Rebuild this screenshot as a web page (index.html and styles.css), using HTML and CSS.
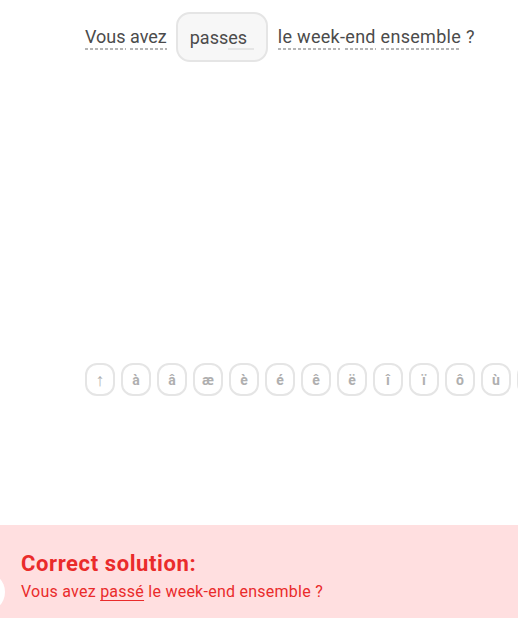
FILE: index.html
```html
<!DOCTYPE html>
<html lang="fr">
<head>
<meta charset="utf-8">
<link rel="stylesheet" href="styles.css">
</head>
<body>
<div class="page">
  <main class="challenge">
    <div class="sentence">
      <span class="tok">Vous</span><span class="sp"> </span><span class="tok">avez</span>
      <div class="answer"><span class="typed">passes<span class="blank"></span></span></div>
      <span class="rest"><span class="tok">le week</span><span class="sp">-</span><span class="tok">end</span><span class="sp"> </span><span class="tok">ensemble</span><span class="sp"> ?</span></span>
    </div>
    <div class="keys">
      <button class="key shift">↑</button>
      <button class="key">à</button>
      <button class="key">â</button>
      <button class="key">æ</button>
      <button class="key">è</button>
      <button class="key">é</button>
      <button class="key">ê</button>
      <button class="key">ë</button>
      <button class="key">î</button>
      <button class="key">ï</button>
      <button class="key">ô</button>
      <button class="key">ù</button>
      <button class="key">û</button>
    </div>
  </main>
  <footer class="feedback">
    <span class="bubble"></span>
    <h2 class="fb-title">Correct solution:</h2>
    <p class="fb-text">Vous avez <u>passé</u> le week-end ensemble ?</p>
  </footer>
</div>
</body>
</html>
```
FILE: styles.css
```css
html, body {
  margin: 0;
  padding: 0;
  background: #fff;
  overflow: hidden;
}
.page {
  width: 518px;
  height: 618px;
  display: flex;
  flex-direction: column;
  font-family: Roboto, "Noto Sans", sans-serif;
  overflow: hidden;
}
.challenge {
  flex: 1;
  padding-left: 85px;
  display: flex;
  flex-direction: column;
  min-width: 0;
}
.sentence {
  margin-top: 12px;
  display: flex;
  align-items: center;
  font-size: 18px;
  color: #4b4b4b;
  white-space: pre;
  height: 50px;
}
.rest {
  display: flex;
  letter-spacing: 0.3px;
}
.tok {
  padding-bottom: 3px;
  background-image: repeating-linear-gradient(to right, #b5b5b5 0 3px, transparent 3px 5px);
  background-size: 100% 2px;
  background-repeat: no-repeat;
  background-position: left bottom;
  line-height: 20px;
  margin-top: 3px;
}
.sp { line-height: 20px; margin-top: 3px; padding-bottom: 3px; }
.answer {
  box-sizing: border-box;
  width: 92px;
  height: 50px;
  margin: 0 10px 0 9px;
  border: 2px solid #e5e5e5;
  border-radius: 14px;
  background: #f7f7f7;
  padding-left: 12px;
  display: flex;
  align-items: center;
}
.typed {
  position: relative;
  margin-top: 1px;
}
.blank {
  position: absolute;
  left: 38px;
  bottom: -2px;
  width: 26px;
  height: 2px;
  background: #e5e5e5;
}
.keys {
  margin-top: 301px;
  display: flex;
  gap: 6px;
}
.key {
  flex: none;
  box-sizing: border-box;
  width: 30px;
  height: 33px;
  border: 2px solid #e5e5e5;
  border-radius: 12px;
  background: #fff;
  color: #afafaf;
  font-family: Roboto, "Noto Sans", sans-serif;
  font-weight: 700;
  font-size: 14px;
  padding: 0;
}
.key.shift {
  font-weight: 400;
  font-size: 18px;
}
.feedback {
  position: relative;
  height: 93px;
  background: #ffdfe0;
  color: #ea2b2b;
  padding-left: 21px;
  box-sizing: border-box;
  padding-top: 26px;
}
.bubble {
  position: absolute;
  left: -35px;
  top: 47px;
  width: 40px;
  height: 40px;
  border-radius: 50%;
  background: #fff;
}
.fb-title {
  margin: 0;
  font-size: 22px;
  font-weight: 700;
  letter-spacing: 0.6px;
  line-height: 26px;
}
.fb-text {
  margin: 5px 0 0;
  font-size: 16px;
  letter-spacing: 0.25px;
  line-height: 20px;
}
.fb-text u {
  text-decoration-thickness: 1px;
  text-underline-offset: 3px;
}
```
